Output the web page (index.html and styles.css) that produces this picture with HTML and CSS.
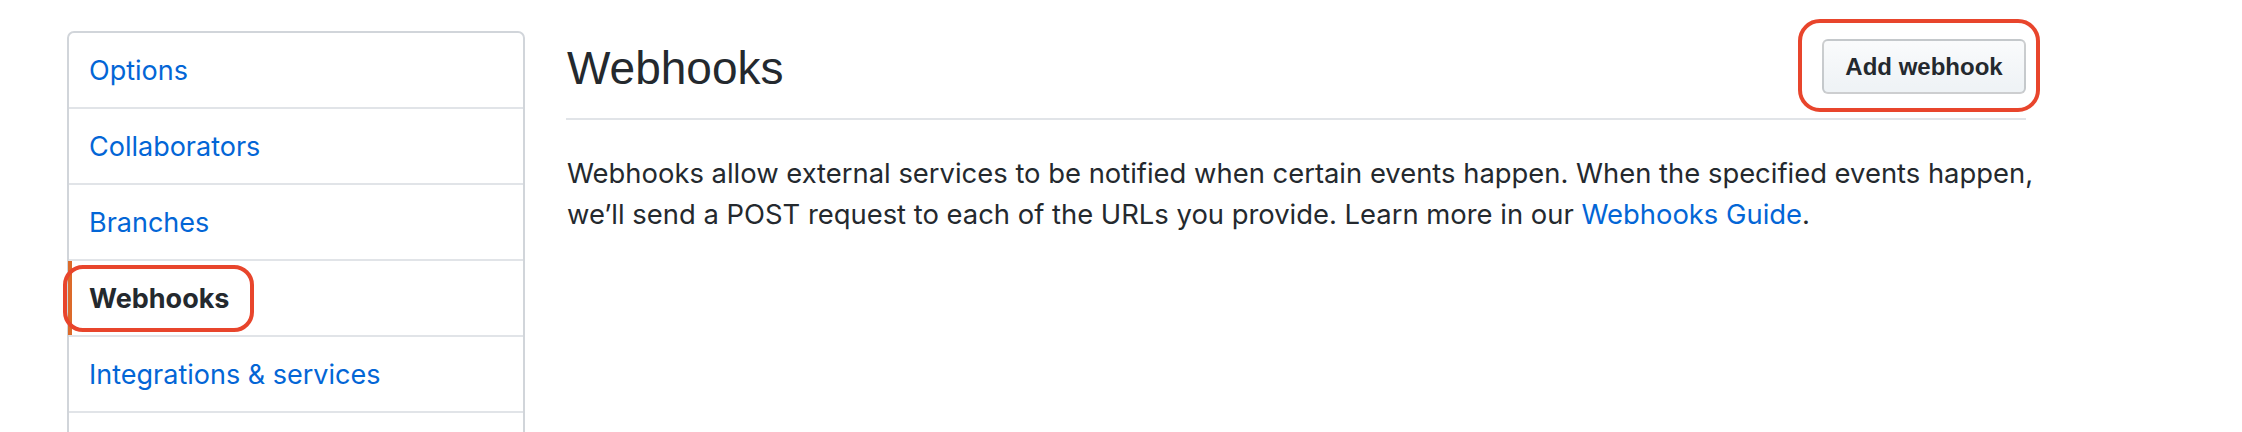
FILE: index.html
```html
<!DOCTYPE html>
<html>
<head>
<meta charset="utf-8">
<link rel="stylesheet" href="styles.css">
</head>
<body>
<div class="page">
  <nav class="menu">
    <a class="menu-item" href="#">Options</a>
    <a class="menu-item" href="#">Collaborators</a>
    <a class="menu-item" href="#">Branches</a>
    <a class="menu-item selected" href="#">Webhooks<span class="mark mark-menu"></span></a>
    <a class="menu-item" href="#">Integrations &amp; services</a>
    <span class="menu-item menu-spacer"></span>
  </nav>
  <main class="content">
    <div class="subhead">
      <h2 class="subhead-heading">Webhooks</h2>
      <span class="btn-wrap">
        <button class="btn">Add webhook</button>
        <span class="mark mark-btn"></span>
      </span>
    </div>
    <p class="desc">Webhooks allow external services to be notified when certain events happen. When the specified events happen, we’ll send a POST request to each of the URLs you provide. Learn more in our <a href="#">Webhooks Guide</a>.</p>
  </main>
</div>
</body>
</html>
```
FILE: styles.css
```css
html, body {
  margin: 0;
  padding: 0;
  background: #ffffff;
  overflow: hidden;
}
body {
  width: 2242px;
  height: 432px;
  font-family: Inter, "Liberation Sans", sans-serif;
  color: #24292e;
}
.page {
  display: flex;
  align-items: flex-start;
  padding: 31px 0 0 67px;
  gap: 41px;
}
.menu {
  width: 454px;
  flex: none;
  border: 2px solid #d1d5da;
  border-radius: 7px;
  display: flex;
  flex-direction: column;
}
.menu-item {
  position: relative;
  display: flex;
  align-items: center;
  height: 74px;
  padding-left: 20px;
  border-top: 2px solid #e1e4e8;
  font-size: 27px;
  color: #0366d6;
  text-decoration: none;
}
.menu-item:first-child {
  border-top: 0;
}
.menu-item.selected {
  font-weight: 700;
  color: #24292e;
}
.menu-item.selected::before {
  content: "";
  position: absolute;
  left: -1px;
  top: 0;
  bottom: 0;
  width: 4px;
  background: #dc6a2a;
}
.mark {
  position: absolute;
  border: 4px solid #e8452c;
  box-sizing: border-box;
  pointer-events: none;
}
.mark-menu {
  left: -6px;
  top: 4px;
  width: 191px;
  height: 67px;
  border-radius: 20px;
}
.content {
  width: 1460px;
  flex: none;
}
.subhead {
  display: flex;
  justify-content: space-between;
  align-items: flex-start;
  padding-bottom: 22px;
  border-bottom: 2px solid #e1e4e8;
}
.subhead-heading {
  margin: 9px 0 0 1px;
  font-family: "Liberation Sans", Arial, sans-serif;
  font-weight: 400;
  font-size: 46px;
  line-height: 56px;
  color: #24292e;
}
.btn-wrap {
  position: relative;
  display: block;
  margin-top: 8px;
}
.btn {
  display: block;
  width: 204px;
  height: 55px;
  padding: 0;
  border: 2px solid rgba(27, 31, 35, 0.2);
  border-radius: 6px;
  background: linear-gradient(180deg, #fafbfc 0%, #eff3f6 90%);
  font-family: "Liberation Sans", Arial, sans-serif;
  font-weight: 700;
  font-size: 24px;
  color: #24292e;
}
.mark-btn {
  left: -24px;
  top: -20px;
  width: 242px;
  height: 93px;
  border-radius: 22px;
}
.desc {
  margin: 33px -14px 0 1px;
  font-size: 27.4px;
  line-height: 41px;
  color: #24292e;
}
.desc a {
  color: #0366d6;
  text-decoration: none;
}
```
